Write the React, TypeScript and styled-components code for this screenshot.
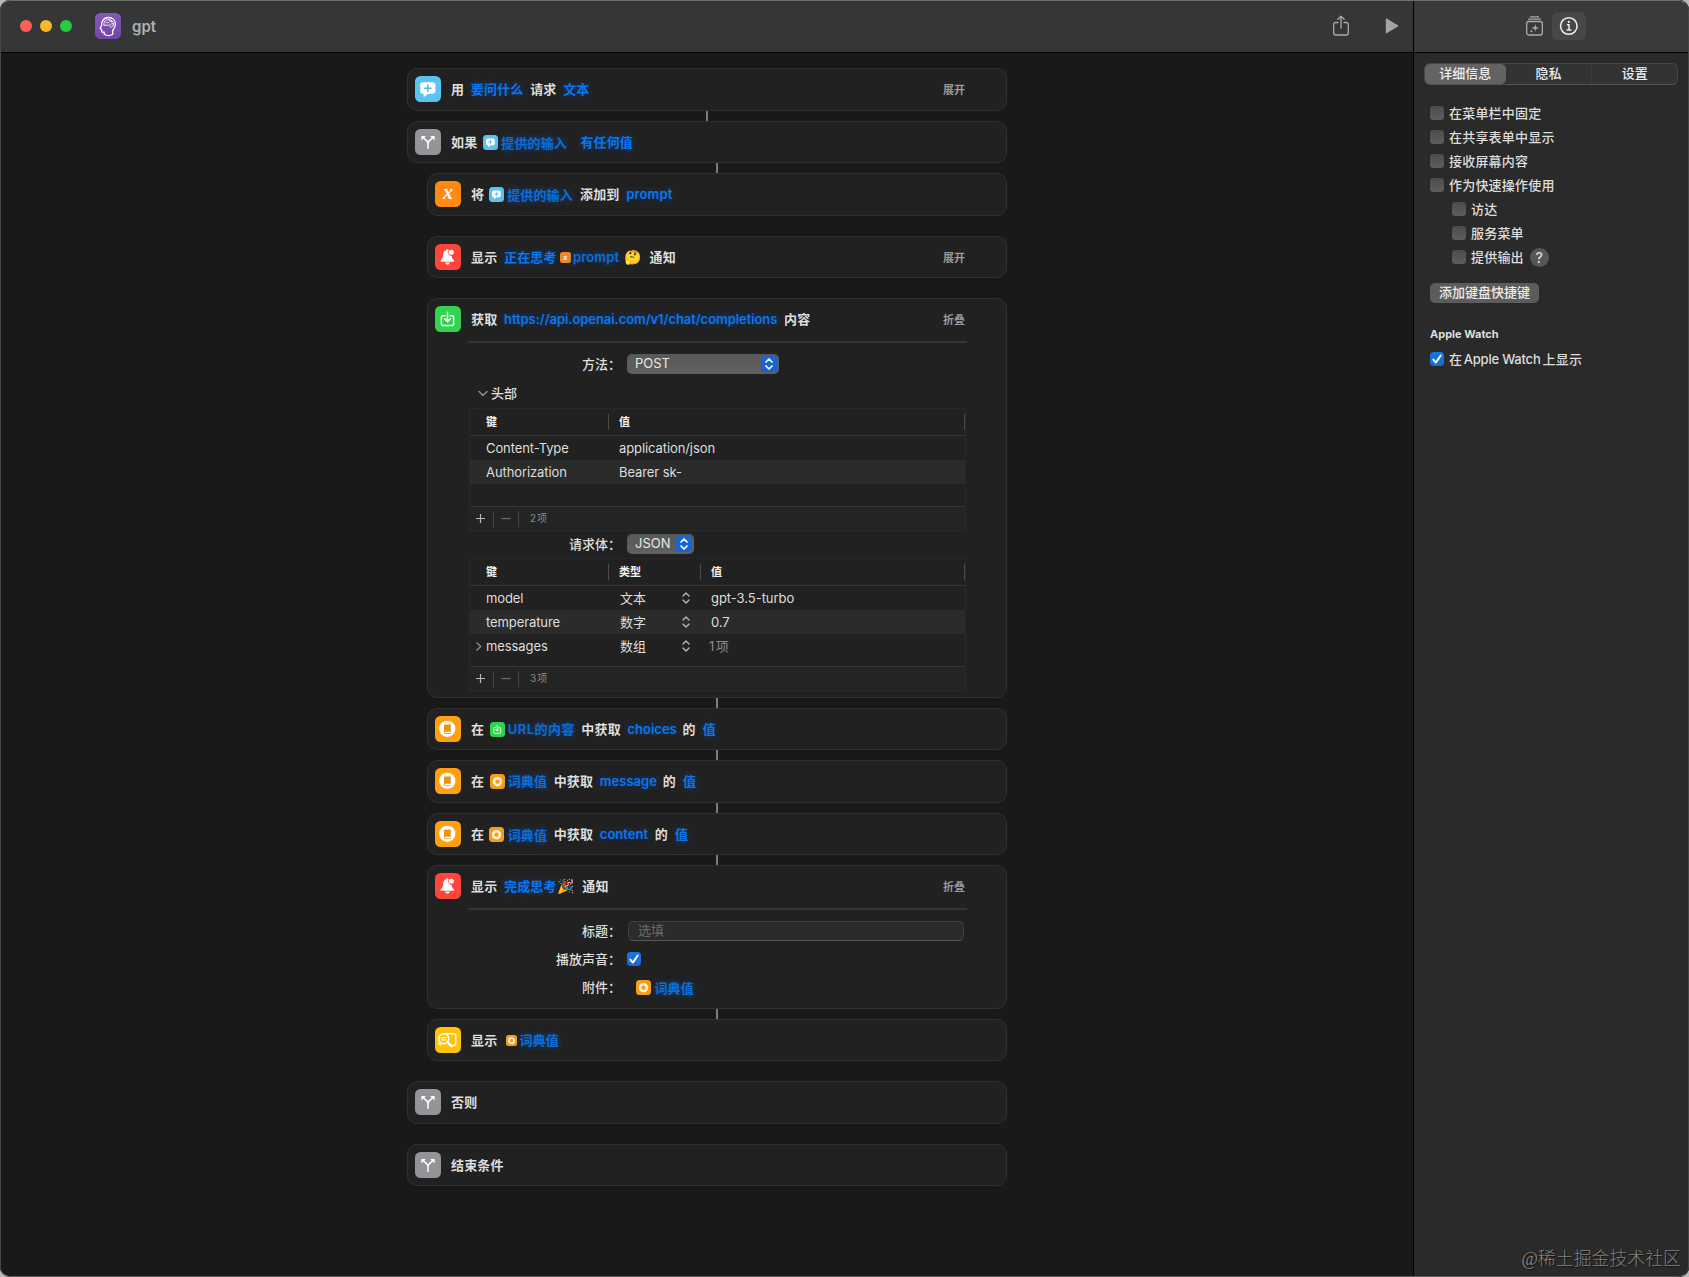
import React from "react";
import styled, { createGlobalStyle, css } from "styled-components";

const Global = createGlobalStyle`
  *, *::before, *::after { box-sizing: border-box; }
  html, body { margin: 0; padding: 0; background: #b9b9b9; overflow: hidden; }
  body {
    font-family: Inter, "Noto Sans CJK SC", "Noto Color Emoji", sans-serif;
    font-size: 13px;
    line-height: 20px;
    color: #dedede;
  }
`;

/* ---------- window ---------- */

const Window = styled.div`
  position: relative;
  display: grid;
  grid-template-columns: 1413px 1fr;
  width: 1689px;
  height: 1277px;
  border-radius: 10px;
  overflow: hidden;
  background: #191919;
  &::after {
    content: "";
    position: absolute;
    inset: 0;
    border: 1px solid #464747;
    border-top-color: #6d6e6e;
    border-bottom-color: #5c5c5c;
    border-radius: 10px;
    pointer-events: none;
  }
`;
const Main = styled.main`
  display: flex;
  flex-direction: column;
`;
const Side = styled.aside`
  display: flex;
  flex-direction: column;
  background: #2a2a2a;
  border-left: 1px solid #000;
`;
const Bar = styled.header<{ $side?: boolean }>`
  display: flex;
  align-items: center;
  height: 53px;
  flex: none;
  border-bottom: 1px solid #000;
  background: ${(p) => (p.$side ? "#393a3b" : "#353736")};
  padding: ${(p) => (p.$side ? "0 0 0 112px" : "0 14px 1px 20px")};
`;
const Lights = styled.div`
  display: flex;
  gap: 8px;
  margin-right: 23px;
`;
const Light = styled.i<{ $c: string }>`
  width: 12px;
  height: 12px;
  border-radius: 50%;
  background: ${(p) => p.$c};
`;
const AppName = styled.h1`
  margin: 0 auto 0 11px;
  padding-top: 2px;
  font-size: 15px;
  font-weight: 600;
  color: #b1b2b2;
`;
const ToolIcon = styled.span<{ $ml?: number; $on?: boolean }>`
  display: flex;
  align-items: center;
  justify-content: center;
  margin-left: ${(p) => p.$ml ?? 0}px;
  ${(p) =>
    p.$on &&
    css`
      width: 34px;
      height: 28px;
      border-radius: 6px;
      background: #464748;
    `}
`;

/* ---------- flow ---------- */

const Flow = styled.div`
  display: flex;
  flex-direction: column;
  width: 600px;
  margin: 15px 0 0 407px;
`;
const Card = styled.section<{ $h: number; $in?: boolean; $gap?: number }>`
  height: ${(p) => p.$h}px;
  flex: none;
  margin-left: ${(p) => (p.$in ? 20 : 0)}px;
  margin-top: ${(p) => p.$gap ?? 0}px;
  padding-top: 7px;
  border: 1px solid #303030;
  border-radius: 10px;
  background: #212121;
`;
const Link = styled.i<{ $x: number }>`
  width: 2px;
  height: 10px;
  flex: none;
  margin-left: ${(p) => p.$x}px;
  background: #7c7c7c;
`;
const Head = styled.div`
  display: flex;
  align-items: center;
  height: 26px;
  padding: 0 41px 0 7px;
  font-weight: 600;
  white-space: nowrap;
`;
const Tile = styled.span<{ $bg: string; $s?: number }>`
  display: flex;
  flex: none;
  width: ${(p) => p.$s ?? 26}px;
  height: ${(p) => p.$s ?? 26}px;
  border-radius: ${(p) => (p.$s ? (p.$s > 12 ? 3.5 : 2.5) : 5.5)}px;
  background: ${(p) => p.$bg};
  overflow: hidden;
  svg { width: 100%; height: 100%; display: block; }
`;
const Word = styled.span<{ $ml?: number; $w?: number; $ls?: number }>`
  margin-left: ${(p) => p.$ml ?? 6.7}px;
  letter-spacing: ${(p) => p.$ls ?? 0.15}px;
  ${(p) => p.$w && css`width: ${p.$w}px;`}
  flex: none;
`;
const Emoji = styled(Word)`
  font-size: 14px;
`;
const Blue = styled(Word)`
  color: #0778f2;
  text-shadow: 0 0 7px rgba(0, 110, 255, 0.4);
`;
const Chip = styled.span<{ $ml?: number; $gap?: number; $dy?: number; $w?: number; $ls?: number }>`
  display: flex;
  flex: none;
  align-items: center;
  gap: ${(p) => p.$gap ?? 3}px;
  ${(p) => p.$w && css`width: ${p.$w}px;`}
  margin-left: ${(p) => p.$ml ?? 5}px;
  margin-top: ${(p) => p.$dy ?? 1}px;
  font-weight: 600;
  letter-spacing: ${(p) => p.$ls ?? 0.12}px;
  color: #0a6fd8;
  text-shadow: 0 0 6px rgba(0, 110, 255, 0.5);
`;
const Toggle = styled.span`
  margin-left: auto;
  padding-top: 1px;
  font-size: 11px;
  font-weight: 600;
  color: #9b9b9b;
`;
const Rule = styled.hr`
  width: 499px;
  height: 2px;
  margin: 9px 0 11px 40px;
  border: 0;
  background: #343434;
`;

/* ---------- form controls ---------- */

const Field = styled.div<{ $mt?: number }>`
  display: flex;
  align-items: center;
  height: 20px;
  margin-top: ${(p) => p.$mt ?? 0}px;
`;
const Label = styled.label`
  width: 193px;
  margin-right: 6px;
  text-align: right;
  font-weight: 500;
`;
const Select = styled.span<{ $w: number }>`
  display: flex;
  align-items: center;
  justify-content: space-between;
  width: ${(p) => p.$w}px;
  height: 20px;
  padding: 0 2px 0 8px;
  line-height: 19px;
  border-radius: 5px;
  background: linear-gradient(#585858, #606060);
  color: #e8e8e8;
`;
const SelectText = styled.span`
  height: 20px;
`;
const Stepper = styled.span`
  display: flex;
  align-items: center;
  justify-content: center;
  width: 16px;
  height: 16px;
  border-radius: 4px;
  background: linear-gradient(#1767d8, #1a61d0);
`;
const Disclosure = styled.div`
  display: flex;
  align-items: center;
  gap: 3px;
  height: 20px;
  margin: 9px 0 5px 50px;
  font-weight: 500;
`;
const Input = styled.div`
  width: 336px;
  height: 20px;
  margin-left: 1px;
  padding-left: 9px;
  line-height: 17px;
  border: 1px solid #3f3f3f;
  border-bottom-color: #585858;
  border-radius: 5px;
  background: #2b2b2b;
  color: #6c6c6c;
`;
const Box = styled.span<{ $on?: boolean }>`
  display: flex;
  flex: none;
  width: 14px;
  height: 14px;
  border-radius: 3.5px;
  background: ${(p) => (p.$on ? "linear-gradient(#1b75e2, #1769cf)" : "linear-gradient(#4c4c4c, #5e5e5e)")};
`;

/* ---------- tables ---------- */

const Table = styled.div<{ $mt?: number }>`
  width: 497px;
  margin: ${(p) => p.$mt ?? 0}px 0 0 41px;
  border: solid #282828;
  border-width: 0 1px;
`;
const Line = styled.div<{ $three?: boolean; $alt?: boolean }>`
  display: grid;
  grid-template-columns: ${(p) => (p.$three ? "139px 92px 264px" : "139px 356px")};
  align-items: center;
  height: 24px;
  background: ${(p) => (p.$alt ? "#2b2b2b" : "transparent")};
`;
const HeadLine = styled(Line)`
  height: 28px;
  border-top: 1px solid #272727;
  border-bottom: 1px solid #363636;
  font-size: 11px;
  font-weight: 700;
  color: #f2f2f2;
`;
const Cell = styled.span<{ $pl?: number; $dim?: boolean; $ls?: number }>`
  display: flex;
  align-items: center;
  padding-left: ${(p) => p.$pl ?? 10}px;
  color: ${(p) => (p.$dim ? "#8d8d8d" : "inherit")};
  letter-spacing: ${(p) => p.$ls ?? -0.09}px;
`;
const HeadCell = styled(Cell)`
  height: 16px;
  border-right: 1px solid #4a4a4a;
`;
const TypeCell = styled(Cell)`
  justify-content: space-between;
  padding: 0 11px 0 11px;
  letter-spacing: 0.1px;
`;
const Spacer = styled.div<{ $h: number }>`
  height: ${(p) => p.$h}px;
`;
const Foot = styled.div`
  display: flex;
  align-items: center;
  height: 25px;
  padding-left: 5px;
  border-top: 1px solid #343636;
  border-bottom: 1px solid #272828;
  background: #232525;
  font-size: 10px;
  color: #8a8a8a;
  i { width: 1px; height: 16px; background: #454545; }
  svg { margin: 0 7px 0 0; }
  i + svg { margin: 0 7px; }
  span { margin: -1px 0 0 11px; letter-spacing: 1px; }
`;
const MessageCell = styled(Cell)`
  gap: 4px;
`;

/* ---------- inspector ---------- */

const Segments = styled.div`
  display: flex;
  width: 254px;
  height: 22px;
  margin: 10px 0 16px 10px;
  border: 1px solid #444645;
  border-bottom-color: #525453;
  border-radius: 6px;
  background: #323433;
`;
const Segment = styled.span<{ $w: number; $on?: boolean; $rule?: boolean }>`
  width: ${(p) => p.$w}px;
  height: 20px;
  line-height: 18px;
  text-align: center;
  font-weight: 500;
  color: #ececec;
  ${(p) => p.$rule && css`border-right: 1px solid #3a3c3b;`}
  ${(p) => p.$on && css`background: #636363; border-radius: 5px;`}
`;
const Options = styled.div`
  display: flex;
  flex-direction: column;
  padding-left: 16px;
  font-weight: 500;
  letter-spacing: 0.2px;
`;
const Option = styled.div<{ $sub?: boolean }>`
  display: flex;
  align-items: center;
  gap: 5px;
  height: 24px;
  padding-left: ${(p) => (p.$sub ? 22 : 0)}px;
`;
const Latin = styled.span`
  margin: 0 2px 0 1.5px;
  letter-spacing: -0.2px;
`;
const Help = styled.span`
  width: 19px;
  height: 19px;
  margin-left: 1px;
  border-radius: 50%;
  background: #565656;
  line-height: 19px;
  text-align: center;
  font-size: 14px;
`;
const KeyButton = styled.button`
  width: 109px;
  height: 20px;
  margin: 14px 0 20px;
  padding: 0 0 2px;
  border: 0;
  border-radius: 5px;
  background: #5c5c5c;
  color: #ececec;
  font: inherit;
  line-height: 18px;
`;
const Group = styled.h2`
  margin: 0 0 3px;
  padding-top: 1px;
  font-size: 11px;
  line-height: 20px;
  font-weight: 700;
  letter-spacing: 0;
`;
const Watermark = styled.div`
  position: absolute;
  right: 8px;
  bottom: 5px;
  font-family: "Liberation Serif", "Noto Sans CJK SC", sans-serif;
  font-weight: 300;
  font-size: 17.9px;
  line-height: 26px;
  color: #808080;
  text-shadow: 1px 1px 1px #111;
`;

/* ---------- glyphs ---------- */

const AskGlyph = () => (
  <svg viewBox="0 0 26 26">
    <path fill="#fff" d="M8 6.2h9.6a2.8 2.8 0 0 1 2.8 2.8v6a2.8 2.8 0 0 1-2.8 2.8h-4.4L9.6 20.6c-.6.5-1 .2-1-.4v-2.4H8A2.8 2.8 0 0 1 5.2 15V9A2.8 2.8 0 0 1 8 6.2z" />
    <path stroke="#44b9ea" strokeWidth="1.4" strokeLinecap="round" d="M12.8 9v6.4M9.6 12.2h6.4" />
  </svg>
);
const BranchGlyph = () => (
  <svg viewBox="0 0 26 26" fill="none">
    <path stroke="#fff" strokeWidth="1.5" strokeLinecap="round" d="M13 19.3v-4.6c0-1.4-.5-2-1.3-2.8L8 8.3M13 14.7c0-1.4.5-2 1.3-2.8L18 8.3" />
    <path fill="#fff" d="M6.3 6.9h4.6L6.3 11.4zM19.7 6.9h-4.6l4.6 4.5z" />
  </svg>
);
const VarGlyph = () => (
  <svg viewBox="0 0 26 26">
    <text x="13" y="18" textAnchor="middle" fill="#fff" fontFamily="Liberation Serif, serif" fontStyle="italic" fontWeight="700" fontSize="20">x</text>
  </svg>
);
const BellGlyph = () => (
  <svg viewBox="0 0 26 26">
    <path fill="#fff" d="M12.3 5.3c.7 0 1.2.4 1.4.9a3.7 3.7 0 0 0 3 5.7c.1 2 .9 3.2 2 4.2.8.8.6 1.7-.5 1.7H6.5c-1.1 0-1.3-.9-.5-1.7 1.2-1.1 1.9-2.3 2-4.7.2-2.7 1.1-4.4 2.9-5.1.2-.6.7-1 1.4-1z" />
    <circle cx="16.3" cy="8.3" r="2.5" fill="#fff" />
    <path fill="#fff" d="M10.2 18.6h4.6a2.3 2.1 0 0 1-4.6 0z" />
  </svg>
);
const FetchGlyph = () => (
  <svg viewBox="0 0 26 26" fill="none" stroke="#fff" strokeWidth="1.5" strokeLinecap="round" strokeLinejoin="round">
    <path d="M9.8 9.7H7.9A1.5 1.5 0 0 0 6.4 11.2v6.9a1.5 1.5 0 0 0 1.5 1.5h9.2a1.5 1.5 0 0 0 1.5-1.5v-6.9a1.5 1.5 0 0 0-1.5-1.5H15.2M12.5 6.3v9M9.8 12.9l2.7 2.7 2.7-2.7" />
  </svg>
);
const BookGlyph = () => (
  <svg viewBox="0 0 26 26">
    <circle cx="12.3" cy="12.8" r="8.1" fill="#fff" />
    <path fill="#e8950e" d="M10.5 8.5h5.3v7.2h-5.6a.7.7 0 0 0 0 1.2h5.6v.9h-5.5a1.3 1.3 0 0 1-1.3-1.3V9.9c0-.8.6-1.4 1.5-1.4z" />
  </svg>
);
const RingGlyph = () => (
  <svg viewBox="0 0 26 26">
    <circle cx="13" cy="13.3" r="6" fill="none" stroke="#fff3dc" strokeWidth="4.4" />
  </svg>
);
const LookGlyph = () => (
  <svg viewBox="0 0 26 26" fill="none" stroke="#fff" strokeWidth="1.5" strokeLinecap="round" strokeLinejoin="round">
    <path d="M5.6 17.8a2 2 0 0 1-1.7-1.6M11.5 6.7h7.3a2 2 0 0 1 2 2v7.8a2 2 0 0 1-2 2h-1.3" />
    <circle cx="8.8" cy="11.7" r="5" />
    <path d="M6.6 10.6h4.4M6.6 12.8h4.4" strokeWidth="1.2" />
    <path d="M12.5 15.3l4 3.9" strokeWidth="2.3" />
  </svg>
);
const HeadGlyph = () => (
  <svg viewBox="0 0 26 26" fill="none" stroke="#fff" strokeWidth="1.3" strokeLinecap="round" strokeLinejoin="round">
    <path d="M9.2 21.3v-2.1H7.8c-.8 0-1.2-.5-1.2-1.2v-1.5l-1.1-.6c-.4-.3-.4-.6-.2-1l1.2-2.2c-.3-5 2.7-8.2 7-8.2 4.1 0 6.9 2.7 6.9 6.7 0 3-1.6 4.8-2.7 6.3v3.8a8 8 0 0 1-8.5 0z" />
    <path strokeWidth=".9" d="M9 12c-.7-3.2 1.5-5.4 4.6-5.4 2.8 0 4.8 1.9 4.8 4.5 0 2-1 3-2.3 3-1.4 0-1.3-1.5-2.4-1.9C12 11.6 10 13.2 9 12zM11.2 9.3c1 .8 2.2.8 3-.3M14 6.8c.2 1.2 1.1 1.9 2.7 1.8M15 12c.3-1.2 1.6-1.7 3.2-1" />
  </svg>
);
const ShareGlyph = () => (
  <svg width="16" height="21" viewBox="0 0 16 21" fill="none" stroke="#a9aaaa" strokeWidth="1.3" strokeLinecap="round" strokeLinejoin="round">
    <path d="M5 7.5H2.6A1.9 1.9 0 0 0 .7 9.4v8.7A1.9 1.9 0 0 0 2.6 20h10.8a1.9 1.9 0 0 0 1.9-1.9V9.4a1.9 1.9 0 0 0-1.9-1.9H11M8 13V1.2M4.9 4.2L8 1.1l3.1 3.1" />
  </svg>
);
const PlayGlyph = () => (
  <svg width="14" height="16" viewBox="0 0 14 16" fill="#a3a4a4">
    <path d="M.8 1.1c0-.5.4-.7.8-.5l11.3 6.7c.5.3.5.9 0 1.2L1.6 15.3c-.4.2-.8 0-.8-.5z" />
  </svg>
);
const LibraryGlyph = () => (
  <svg width="17" height="20" viewBox="0 0 17 20" fill="none" stroke="#a9aaaa" strokeWidth="1.3" strokeLinecap="round">
    <rect x=".7" y="5.5" width="15.6" height="13.5" rx="2" />
    <path d="M2.6 3.2h11.8M4.4 .9h8.2" strokeWidth="1.2" />
    <path fill="#a9aaaa" stroke="none" d="M9.3 7.7c.4 3 1.1 3.7 4 4.2-2.9.4-3.6 1.1-4 4.1-.4-3-1.1-3.7-4-4.1 2.9-.5 3.6-1.2 4-4.2zM5.4 13.2c.2 1.4.6 1.8 2 2-1.4.2-1.8.6-2 2-.2-1.4-.6-1.8-2-2 1.4-.2 1.8-.6 2-2z" />
  </svg>
);
const InfoGlyph = () => (
  <svg width="20" height="20" viewBox="0 0 20 20" fill="none" stroke="#f0f0f0" strokeWidth="1.5" strokeLinecap="round">
    <circle cx="9.8" cy="10" r="8.3" />
    <path d="M8.5 8.8H10v5M8.1 14h3.8" />
    <circle cx="9.8" cy="5.9" r="1.1" fill="#f0f0f0" stroke="none" />
  </svg>
);
const UpDown = ({ w = 8, c = "#fff", sw = 1.7 }: { w?: number; c?: string; sw?: number }) => (
  <svg width={w} height="12" viewBox="0 0 8 12" fill="none" stroke={c} strokeWidth={sw} strokeLinecap="round" strokeLinejoin="round">
    <path d="M1 4l3-3 3 3M1 8l3 3 3-3" />
  </svg>
);
const Check = () => (
  <svg width="14" height="14" viewBox="0 0 14 14" fill="none" stroke="#fff" strokeWidth="1.9" strokeLinecap="round" strokeLinejoin="round">
    <path d="M3.3 7.6l2.6 3L10.7 3.5" />
  </svg>
);
const Plus = () => (
  <svg width="11" height="11" viewBox="0 0 11 11" stroke="#b8b8b8" strokeWidth="1.2"><path d="M5.5 1v9M1 5.5h9" /></svg>
);
const Minus = () => (
  <svg width="10" height="11" viewBox="0 0 10 11" stroke="#707070" strokeWidth="1.2"><path d="M.5 5.5h9" /></svg>
);
const ChevronDown = () => (
  <svg width="10" height="7" viewBox="0 0 10 7" fill="none" stroke="#8c8c8c" strokeWidth="1.5" strokeLinecap="round"><path d="M1 1.5l4 4 4-4" /></svg>
);
const ChevronRight = () => (
  <svg width="6" height="9" viewBox="0 0 6 9" fill="none" stroke="#8c8c8c" strokeWidth="1.5" strokeLinecap="round"><path d="M1 1l3.7 3.5L1 8" /></svg>
);

/* ---------- shared pieces ---------- */

const CYAN = "#5ac3f0";
const GRAY = "#949498";
const ORANGE = "#ff8a12";
const AMBER = "#ff9f12";
const RED = "#ff453b";
const GREEN = "#31d34f";

const DictChip = ({ size = 15, ...rest }: { size?: number; $ml?: number; $gap?: number; $dy?: number }) => (
  <Chip {...rest}>
    <Tile $bg="#f79c1c" $s={size}><RingGlyph /></Tile>词典值
  </Chip>
);
const InputChip = ({ ml }: { ml: number }) => (
  <Chip $ml={ml}>
    <Tile $bg={CYAN} $s={15}><AskGlyph /></Tile>提供的输入
  </Chip>
);
const TableFoot = ({ count }: { count: number }) => (
  <Foot><Plus /><i /><Minus /><i /><span>{count}项</span></Foot>
);
const GetValue = ({ h, keyName, w, chip }: { h: number; keyName: string; w: number; chip: React.ReactNode }) => (
  <Card $h={h} $in>
    <Head>
      <Tile $bg={AMBER}><BookGlyph /></Tile>
      <Word $ml={10}>在</Word>
      {chip}
      <Word>中获取</Word>
      <Blue $w={w} $ls={0}>{keyName}</Blue>
      <Word $ml={7}>的</Word>
      <Blue $ml={7}>值</Blue>
    </Head>
  </Card>
);

const topOptions = ["在菜单栏中固定", "在共享表单中显示", "接收屏幕内容", "作为快速操作使用"];

export default function App() {
  return (
    <>
      <Global />
      <Window>
        <Main>
          <Bar>
            <Lights>
              <Light $c="#ff5f57" />
              <Light $c="#f9b92e" />
              <Light $c="#29c940" />
            </Lights>
            <Tile $bg="linear-gradient(#8557b8, #7445a9)"><HeadGlyph /></Tile>
            <AppName>gpt</AppName>
            <ToolIcon><ShareGlyph /></ToolIcon>
            <ToolIcon $ml={36}><PlayGlyph /></ToolIcon>
          </Bar>

          <Flow>
            <Card $h={43}>
              <Head>
                <Tile $bg={CYAN}><AskGlyph /></Tile>
                <Word $ml={10}>用</Word>
                <Blue>要问什么</Blue>
                <Word>请求</Word>
                <Blue>文本</Blue>
                <Toggle>展开</Toggle>
              </Head>
            </Card>
            <Link $x={299} />
            <Card $h={42}>
              <Head>
                <Tile $bg={GRAY}><BranchGlyph /></Tile>
                <Word $ml={10}>如果</Word>
                <InputChip ml={6} />
                <Blue $ml={13.5}>有任何值</Blue>
              </Head>
            </Card>
            <Link $x={309} />
            <Card $h={43} $in>
              <Head>
                <Tile $bg={ORANGE}><VarGlyph /></Tile>
                <Word $ml={10}>将</Word>
                <InputChip ml={5} />
                <Word $ml={7.3}>添加到</Word>
                <Blue>prompt</Blue>
              </Head>
            </Card>
            <Card $h={42} $in $gap={20}>
              <Head>
                <Tile $bg={RED}><BellGlyph /></Tile>
                <Word $ml={10}>显示</Word>
                <Blue>正在思考</Blue>
                <Chip $ml={3.5} $gap={2} $dy={0} $w={59}>
                  <Tile $bg="#f08a24" $s={11}><VarGlyph /></Tile>prompt
                </Chip>
                <Emoji $ml={5.5} $w={18}>🤔</Emoji>
                <Word $ml={7}>通知</Word>
                <Toggle>展开</Toggle>
              </Head>
            </Card>

            <Card $h={400} $in $gap={20}>
              <Head>
                <Tile $bg={GREEN}><FetchGlyph /></Tile>
                <Word $ml={10}>获取</Word>
                <Blue $w={273} $ls={-0.06}>https://api.openai.com/v1/chat/completions</Blue>
                <Word $ml={7}>内容</Word>
                <Toggle>折叠</Toggle>
              </Head>
              <Rule />
              <Field>
                <Label>方法：</Label>
                <Select $w={152}><SelectText>POST</SelectText><Stepper><UpDown /></Stepper></Select>
              </Field>
              <Disclosure><ChevronDown />头部</Disclosure>
              <Table>
                <HeadLine>
                  <HeadCell $pl={16}>键</HeadCell>
                  <HeadCell>值</HeadCell>
                </HeadLine>
                <Line><Cell $pl={16}>Content-Type</Cell><Cell>application/json</Cell></Line>
                <Line $alt><Cell $pl={16}>Authorization</Cell><Cell>Bearer sk-</Cell></Line>
                <Spacer $h={22} />
                <TableFoot count={2} />
              </Table>
              <Field $mt={3}>
                <Label>请求体：</Label>
                <Select $w={67}><SelectText>JSON</SelectText><Stepper><UpDown /></Stepper></Select>
              </Field>
              <Table $mt={4}>
                <HeadLine $three>
                  <HeadCell $pl={16}>键</HeadCell>
                  <HeadCell>类型</HeadCell>
                  <HeadCell>值</HeadCell>
                </HeadLine>
                <Line $three>
                  <Cell $pl={16}>model</Cell>
                  <TypeCell>文本<UpDown c="#bdbdbd" sw={1.3} /></TypeCell>
                  <Cell $ls={-0.04}>gpt-3.5-turbo</Cell>
                </Line>
                <Line $three $alt>
                  <Cell $pl={16}>temperature</Cell>
                  <TypeCell>数字<UpDown c="#bdbdbd" sw={1.3} /></TypeCell>
                  <Cell>0.7</Cell>
                </Line>
                <Line $three>
                  <MessageCell $pl={6}><ChevronRight />messages</MessageCell>
                  <TypeCell>数组<UpDown c="#bdbdbd" sw={1.3} /></TypeCell>
                  <Cell $pl={8} $dim $ls={1.5}>1项</Cell>
                </Line>
                <Spacer $h={8} />
                <TableFoot count={3} />
              </Table>
            </Card>
            <Link $x={309} />

            <GetValue
              h={42}
              keyName="choices"
              w={48}
              chip={
                <Chip $ml={5.5} $w={85} $dy={0} $ls={0.5}>
                  <Tile $bg={GREEN} $s={15}><FetchGlyph /></Tile>URL的内容
                </Chip>
              }
            />
            <Link $x={309} />
            <GetValue h={43} keyName="message" w={56} chip={<DictChip $ml={5.5} $dy={0} />} />
            <Link $x={309} />
            <GetValue h={42} keyName="content" w={48} chip={<DictChip $ml={4.5} $gap={4} />} />
            <Link $x={309} />

            <Card $h={144} $in>
              <Head>
                <Tile $bg={RED}><BellGlyph /></Tile>
                <Word $ml={10}>显示</Word>
                <Blue>完成思考</Blue>
                <Emoji $ml={1} $w={18}>🎉</Emoji>
                <Word>通知</Word>
                <Toggle>折叠</Toggle>
              </Head>
              <Rule />
              <Field>
                <Label>标题：</Label>
                <Input>选填</Input>
              </Field>
              <Field $mt={8}>
                <Label>播放声音：</Label>
                <Box $on><Check /></Box>
              </Field>
              <Field $mt={8}>
                <Label>附件：</Label>
                <DictChip $ml={9} $gap={3.5} $dy={1} />
              </Field>
            </Card>
            <Link $x={309} />
            <Card $h={42} $in>
              <Head>
                <Tile $bg="#ffc40a"><LookGlyph /></Tile>
                <Word $ml={10}>显示</Word>
                <DictChip size={11} $ml={8.7} $gap={2.5} $dy={0} />
              </Head>
            </Card>
            <Card $h={43} $gap={20}>
              <Head>
                <Tile $bg={GRAY}><BranchGlyph /></Tile>
                <Word $ml={10}>否则</Word>
              </Head>
            </Card>
            <Card $h={42} $gap={20}>
              <Head>
                <Tile $bg={GRAY}><BranchGlyph /></Tile>
                <Word $ml={10}>结束条件</Word>
              </Head>
            </Card>
          </Flow>
        </Main>

        <Side>
          <Bar $side>
            <ToolIcon><LibraryGlyph /></ToolIcon>
            <ToolIcon $on $ml={9}><InfoGlyph /></ToolIcon>
          </Bar>
          <Segments>
            <Segment $w={82} $on>详细信息</Segment>
            <Segment $w={88} $rule>隐私</Segment>
            <Segment $w={86}>设置</Segment>
          </Segments>
          <Options>
            {topOptions.map((t) => (
              <Option key={t}><Box />{t}</Option>
            ))}
            <Option $sub><Box />访达</Option>
            <Option $sub><Box />服务菜单</Option>
            <Option $sub><Box />提供输出<Help>?</Help></Option>
            <KeyButton>添加键盘快捷键</KeyButton>
            <Group>Apple Watch</Group>
            <Option>
              <Box $on><Check /></Box>
              <span>在<Latin>Apple Watch</Latin>上显示</span>
            </Option>
          </Options>
        </Side>
        <Watermark>@稀土掘金技术社区</Watermark>
      </Window>
    </>
  );
}
